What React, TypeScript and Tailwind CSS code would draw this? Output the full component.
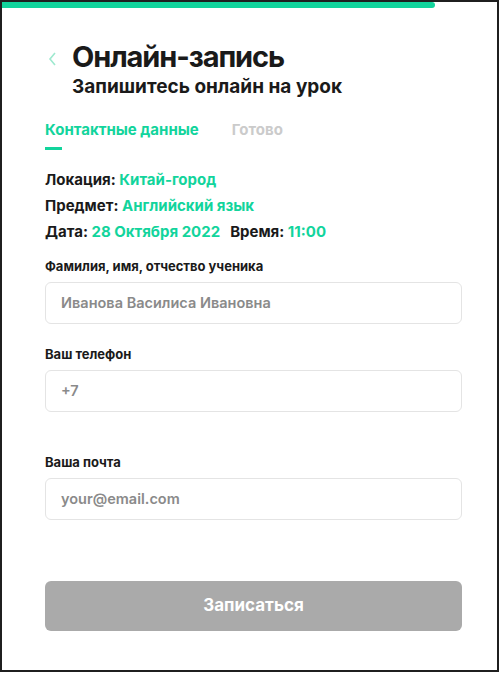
import React from 'react';

const font = { fontFamily: 'Inter, "Noto Sans", sans-serif' };

function Field({ label, placeholder, className = '' }: { label: string; placeholder: string; className?: string }) {
  return (
    <div className={className}>
      <div className="text-[13px] font-bold text-[#1a1a1a] leading-4">{label}</div>
      <div className="mt-[8px] h-[42px] rounded-[6px] border border-[#e4e4e4] flex items-center px-[15px]">
        <span className="text-[14.5px] font-semibold text-[#8a8a8a]">{placeholder}</span>
      </div>
    </div>
  );
}

export default function App() {
  return (
    <div style={font} className="w-[499px] h-[672px] bg-white border-2 border-[#1f1f1f] flex flex-col">
      <div className="h-[6px] w-[433px] bg-[#12d49c] rounded-r-[3px]" />

      <div className="pl-[43px] pr-[35px] flex flex-col">
        <div className="flex items-start mt-[33px]">
          <svg width="10" height="16" viewBox="0 0 10 16" className="mt-[10px] ml-[3px] mr-[14px]">
            <path d="M7 2 L2 8 L7 14" fill="none" stroke="#9ee9cf" strokeWidth="1.6" />
          </svg>
          <div>
            <h1 className="text-[29px] font-bold leading-[32px] text-[#1a1a1a] tracking-[-1.1px]">Онлайн-запись</h1>
            <div className="text-[19px] font-bold leading-[22px] text-[#1a1a1a] mt-[3px]">Запишитесь онлайн на урок</div>
          </div>
        </div>

        <div className="flex mt-[22px] gap-[33px] text-[15px] font-bold leading-5">
          <div className="flex flex-col">
            <span className="text-[#12d49c]">Контактные данные</span>
            <span className="mt-[7px] w-[17px] h-[3px] bg-[#12d49c]" />
          </div>
          <span className="text-[#cbcbcb]">Готово</span>
        </div>

        <div className="mt-[20px] flex flex-col gap-[6px] text-[15px] font-bold leading-5 text-[#1a1a1a]">
          <div>Локация: <span className="text-[#12d49c]">Китай-город</span></div>
          <div>Предмет: <span className="text-[#12d49c]">Английский язык</span></div>
          <div>
            Дата: <span className="text-[#12d49c]">28 Октября 2022</span>
            <span className="ml-[10px]">Время: </span>
            <span className="text-[#12d49c]">11:00</span>
          </div>
        </div>

        <Field className="mt-[16px]" label="Фамилия, имя, отчество ученика" placeholder="Иванова Василиса Ивановна" />
        <Field className="mt-[22px]" label="Ваш телефон" placeholder="+7" />
        <Field className="mt-[42px]" label="Ваша почта" placeholder="your@email.com" />

        <button className="mt-[61px] h-[50px] rounded-[6px] bg-[#aaaaaa] text-white text-[17px] font-bold">
          Записаться
        </button>
      </div>
    </div>
  );
}
